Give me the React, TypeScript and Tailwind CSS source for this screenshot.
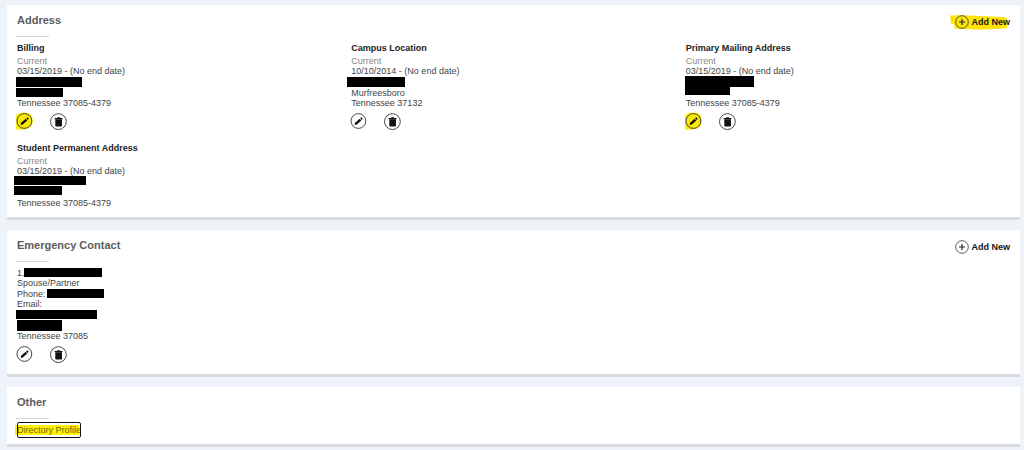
import type { ReactNode } from 'react';

interface AddressEntry {
  title: string;
  dates: string;
  lines: ReactNode[];
  editable?: boolean;
  marked?: boolean;
}

// Blacked-out value
const Redacted = ({ className }: { className: string }) => (
  <span className={`block shrink-0 bg-black ${className}`} />
);

const Line = ({ children }: { children: ReactNode }) => (
  <div className="flex h-[10px] items-center whitespace-pre">{children}</div>
);

const TallLine = ({ children }: { children: ReactNode }) => (
  <div className="flex h-[11px] items-center whitespace-pre">{children}</div>
);

const PencilIcon = ({ marked }: { marked?: boolean }) => (
  <svg viewBox="0 0 17 17" className="h-[17px] w-[17px] overflow-visible">
    {marked && (
      <path
        d="M-1 3 Q0 0 5 -.3 Q12 -1 14.8 3 Q16.8 8 14.8 12.5 Q11.5 16.5 5 16.5 L0 16.7 Q-1.3 16 -1 12 Z"
        fill="#fbea05"
      />
    )}
    <circle cx="7.4" cy="8" r="7.4" fill="none" stroke="#333" strokeWidth="0.9" />
    <path d="M3.6 11.9 L4.1 9.7 L8.7 5.7 L10.3 7.4 L5.8 11.4 Z" fill="#111" />
    <path d="M9.2 5.3 L10 4.6 Q10.7 4.2 11.3 4.9 Q11.9 5.5 11.4 6.2 L10.7 6.9 Z" fill="#111" />
  </svg>
);

const TrashIcon = () => (
  <svg viewBox="0 0 17 17" className="h-[17px] w-[17px] overflow-visible">
    <circle cx="7.4" cy="8.6" r="7.9" fill="none" stroke="#333" strokeWidth="0.9" />
    <path d="M3.7 5 H6 L6.5 4.2 H8.8 L9.3 5 H11.4 V6.3 H3.7 Z" fill="#111" />
    <path d="M4.3 6.3 H11 V12.5 Q11 13.4 10.1 13.4 H5.2 Q4.3 13.4 4.3 12.5 Z" fill="#111" />
  </svg>
);

const Actions = ({ marked }: { marked?: boolean }) => (
  <div className="mt-[5px] flex gap-[17px]">
    <button type="button" aria-label="Edit">
      <PencilIcon marked={marked} />
    </button>
    <button type="button" aria-label="Delete">
      <TrashIcon />
    </button>
  </div>
);

const AddNew = ({ marked }: { marked?: boolean }) => (
  <button
    type="button"
    className="relative mt-[3px] mr-2.5 flex h-[14px] items-center gap-[2px] text-[9px] font-bold text-[#151515]"
  >
    {marked && (
      <svg viewBox="0 0 58 15" className="absolute top-0 -left-[5px] h-[15px] w-[58px]">
        <path d="M0 .5 Q14 -.3 30 1 L56 2.2 Q58 5 57 13 Q40 14.7 28 14.4 L5 13.8 Q4 12 4 9 L1 8.5 Z" fill="#fde30a" />
      </svg>
    )}
    <svg viewBox="0 0 14 14" className="relative h-[14px] w-[14px]">
      <circle cx="7" cy="7" r="6.3" fill="none" stroke="#333" strokeWidth="0.8" />
      <path d="M7 4 V10 M4 7 H10" stroke="#222" strokeWidth="1.2" />
    </svg>
    <span className="relative">Add New</span>
  </button>
);

const Card = ({
  title,
  action,
  className,
  children,
}: {
  title: string;
  action?: ReactNode;
  className: string;
  children: ReactNode;
}) => (
  <section className={`border-b-[3px] border-[#d9dcde] bg-white pt-[7px] pl-2.5 ${className}`}>
    <div className="flex h-4 items-start justify-between">
      <h2 className="text-[11px] leading-4 font-bold text-[#5c5c5c]">{title}</h2>
      {action}
    </div>
    <div className="mt-2 -ml-px h-px w-[33px] bg-[#d3d8db]" />
    {children}
  </section>
);

const addresses: AddressEntry[] = [
  {
    title: 'Billing',
    dates: '03/15/2019 - (No end date)',
    lines: [
      <TallLine key="street"><Redacted className="-ml-px h-[10px] w-[66px]" /></TallLine>,
      <TallLine key="city"><Redacted className="-ml-px h-[9px] w-[47px]" /></TallLine>,
      <Line key="state">Tennessee 37085-4379</Line>,
    ],
    editable: true,
    marked: true,
  },
  {
    title: 'Campus Location',
    dates: '10/10/2014 - (No end date)',
    lines: [
      <TallLine key="street"><Redacted className="-ml-1 h-[10px] w-[58px]" /></TallLine>,
      <TallLine key="city">Murfreesboro</TallLine>,
      <Line key="state">Tennessee 37132</Line>,
    ],
    editable: true,
  },
  {
    title: 'Primary Mailing Address',
    dates: '03/15/2019 - (No end date)',
    lines: [
      <TallLine key="street"><Redacted className="-ml-px h-[11px] w-[69px]" /></TallLine>,
      <div key="city" className="flex h-[11px] items-start"><Redacted className="-ml-px h-2 w-[45px]" /></div>,
      <Line key="state">Tennessee 37085-4379</Line>,
    ],
    editable: true,
    marked: true,
  },
  {
    title: 'Student Permanent Address',
    dates: '03/15/2019 - (No end date)',
    lines: [
      <div key="street" className="flex h-[10px] items-start"><Redacted className="-ml-[3px] h-[9px] w-[72px]" /></div>,
      <div key="city" className="flex h-3 items-start"><Redacted className="-ml-[3px] h-[9px] w-[48px]" /></div>,
      <Line key="state">Tennessee 37085-4379</Line>,
    ],
  },
];

const App = () => {
  return (
    <main
      className="flex min-h-screen flex-col gap-2.5 bg-[#edf3f8] pt-[5px] pr-1 pl-[7px] text-[9px] leading-[10px] text-[#444]"
      style={{ fontFamily: '"Liberation Sans", Arial, sans-serif' }}
    >
      <Card title="Address" action={<AddNew marked />} className="pb-[9px]">
        <div className="mt-[5px] grid grid-cols-3 gap-y-3">
          {addresses.map((a) => (
            <div key={a.title}>
              <h3 className="mb-[2px] leading-3 font-bold text-[#222]">{a.title}</h3>
              <div className="text-[#888]">Current</div>
              <div>{a.dates}</div>
              {a.lines}
              {a.editable && <Actions marked={a.marked} />}
            </div>
          ))}
        </div>
      </Card>

      <Card title="Emergency Contact" action={<AddNew />} className="pb-[11px]">
        <div className="mt-[5px]">
          <TallLine>
            1.
            <Redacted className="-ml-px h-[9px] w-[78px]" />
          </TallLine>
          <Line>Spouse/Partner</Line>
          <TallLine>
            {'Phone: '}
            <Redacted className="-ml-px h-[9px] w-[57px]" />
          </TallLine>
          <Line>Email:</Line>
          <TallLine><Redacted className="-ml-px h-[9px] w-[81px]" /></TallLine>
          <TallLine><Redacted className="h-[11px] w-[45px]" /></TallLine>
          <Line>Tennessee 37085</Line>
          <Actions />
        </div>
      </Card>

      <Card title="Other" className="pb-[6px]">
        <a
          href="#directory-profile"
          className="relative mt-[3px] block h-4 w-fit leading-4 text-[#6f6a10]"
        >
          <span className="absolute top-[3px] -left-[2px] h-[10px] w-full bg-[#fdf000]" />
          <span className="relative">Directory Profile</span>
          <span className="absolute inset-0 rounded-[2px] border border-[#111]" />
        </a>
      </Card>
    </main>
  );
};

export default App;
